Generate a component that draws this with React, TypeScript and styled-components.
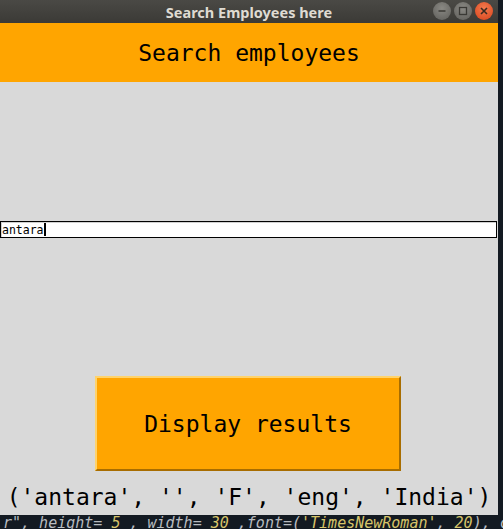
import React from "react";
import styled, { createGlobalStyle } from "styled-components";

const Global = createGlobalStyle`
  html, body { margin: 0; padding: 0; background: #131a22; }
  body { width: 503px; height: 529px; overflow: hidden; }
`;

const Screen = styled.div`
  width: 503px;
  height: 529px;
  display: flex;
  flex-direction: column;
  background: #131a22;
  overflow: hidden;
`;

const Top = styled.div`
  display: flex;
  flex-direction: row;
  height: 515px;
`;

const Window = styled.div`
  width: 498px;
  display: flex;
  flex-direction: column;
  background: #d9d9d9;
`;

const Strip = styled.div`
  flex: 1;
  background: #131a22;
`;

const TitleBar = styled.div`
  height: 23px;
  background: linear-gradient(#4a4945, #3b3a36);
  display: flex;
  align-items: center;
  justify-content: center;
  position: relative;
  font-family: "Noto Sans", "DejaVu Sans", sans-serif;
  font-weight: 700;
  font-size: 14.5px;
  color: #dfdbd2;
`;

const Controls = styled.div`
  position: absolute;
  right: 5px;
  top: 2px;
  display: flex;
  gap: 3px;
`;

const Ctl = styled.div<{ $close?: boolean }>`
  width: 18px;
  height: 18px;
  border-radius: 50%;
  background: ${(p) =>
    p.$close
      ? "radial-gradient(circle at 50% 35%, #f37a4e, #d8431b)"
      : "radial-gradient(circle at 50% 35%, #8a8984, #5e5d59)"};
  display: flex;
  align-items: center;
  justify-content: center;
`;

const Header = styled.div`
  height: 59px;
  background: #ffa500;
  display: flex;
  align-items: center;
  justify-content: center;
  font-family: "DejaVu Sans Mono", monospace;
  font-size: 23px;
  color: #000;
`;

const Body = styled.div`
  flex: 1;
  display: flex;
  flex-direction: column;
  align-items: center;
  padding-top: 139px;
`;

const Entry = styled.div`
  align-self: stretch;
  margin-right: 1px;
  height: 15px;
  background: #fff;
  border: 1px solid #000;
  box-shadow: inset 1px 1px 0 #d0d0d0;
  display: flex;
  align-items: center;
  font-family: "DejaVu Sans Mono", monospace;
  font-size: 11.5px;
  color: #000;
  padding-left: 1px;
`;

const Caret = styled.span`
  display: inline-block;
  width: 2px;
  height: 13px;
  background: #000;
`;

const Button = styled.div`
  margin-top: 138px;
  width: 302px;
  height: 91px;
  margin-left: -2px;
  background: #ffa500;
  border-top: 2px solid #ffd36b;
  border-left: 2px solid #ffd36b;
  border-bottom: 2px solid #a86d00;
  border-right: 2px solid #a86d00;
  display: flex;
  align-items: center;
  justify-content: center;
  font-family: "DejaVu Sans Mono", monospace;
  font-size: 23px;
  color: #000;
`;

const Result = styled.div`
  margin-top: 13px;
  font-family: "DejaVu Sans Mono", monospace;
  font-size: 23px;
  color: #000;
  white-space: pre;
`;

const Editor = styled.div`
  height: 14px;
  overflow: hidden;
  background: #131a22;
  font-family: "DejaVu Sans Mono", monospace;
  font-style: italic;
  font-size: 15px;
  line-height: 17px;
  white-space: pre;
  padding-left: 3px;
  color: #b8bcc0;
`;

const Code = styled.span<{ $c: string }>`
  color: ${(p) => p.$c};
`;

export default function App() {
  return (
    <>
      <Global />
      <Screen>
        <Top>
          <Window>
            <TitleBar>
              Search Employees here
              <Controls>
                <Ctl>
                  <svg width="10" height="10" viewBox="0 0 10 10">
                    <line x1="1.5" y1="5" x2="8.5" y2="5" stroke="#3a3935" strokeWidth="1.5" />
                  </svg>
                </Ctl>
                <Ctl>
                  <svg width="10" height="10" viewBox="0 0 10 10">
                    <rect x="1.5" y="1.5" width="7" height="7" fill="none" stroke="#3a3935" strokeWidth="1.3" />
                  </svg>
                </Ctl>
                <Ctl $close>
                  <svg width="10" height="10" viewBox="0 0 10 10">
                    <path d="M2 2 L8 8 M8 2 L2 8" stroke="#3a2a20" strokeWidth="1.6" />
                  </svg>
                </Ctl>
              </Controls>
            </TitleBar>
            <Header>Search employees</Header>
            <Body>
              <Entry>
                antara
                <Caret />
              </Entry>
              <Button>Display results</Button>
              <Result>('antara', '', 'F', 'eng', 'India')</Result>
            </Body>
          </Window>
          <Strip />
        </Top>
        <Editor>
          <Code $c="#b8bcc0">r", height= </Code>
          <Code $c="#d7c46a">5</Code>
          <Code $c="#b8bcc0"> , width= </Code>
          <Code $c="#d7c46a">30</Code>
          <Code $c="#b8bcc0"> ,font=(</Code>
          <Code $c="#d7c46a">'TimesNewRoman'</Code>
          <Code $c="#b8bcc0">, </Code>
          <Code $c="#d7c46a">20</Code>
          <Code $c="#b8bcc0">), command=regi</Code>
        </Editor>
      </Screen>
    </>
  );
}
